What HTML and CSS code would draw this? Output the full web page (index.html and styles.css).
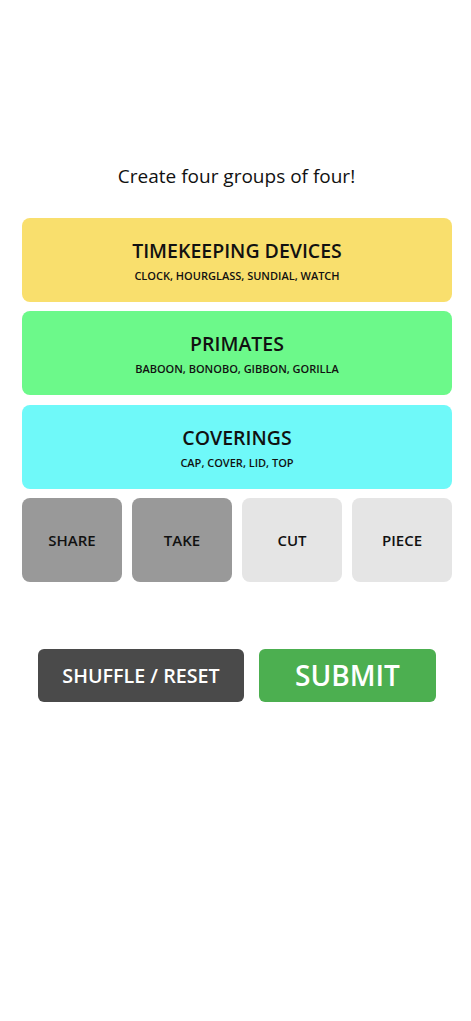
FILE: index.html
```html
<!DOCTYPE html>
<html lang="en">
<head>
<meta charset="utf-8">
<title>Connections</title>
<link rel="stylesheet" href="styles.css">
</head>
<body>
<main class="game">
  <h1 class="prompt">Create four groups of four!</h1>
  <section class="board">
    <div class="group group-yellow">
      <div class="group-title">TIMEKEEPING DEVICES</div>
      <div class="group-words">CLOCK, HOURGLASS, SUNDIAL, WATCH</div>
    </div>
    <div class="group group-green">
      <div class="group-title">PRIMATES</div>
      <div class="group-words">BABOON, BONOBO, GIBBON, GORILLA</div>
    </div>
    <div class="group group-cyan">
      <div class="group-title">COVERINGS</div>
      <div class="group-words">CAP, COVER, LID, TOP</div>
    </div>
    <div class="tiles">
      <div class="tile tile-selected">SHARE</div>
      <div class="tile tile-selected">TAKE</div>
      <div class="tile">CUT</div>
      <div class="tile">PIECE</div>
    </div>
  </section>
  <div class="actions">
    <button class="btn btn-shuffle">SHUFFLE / RESET</button>
    <button class="btn btn-submit">SUBMIT</button>
  </div>
</main>
</body>
</html>
```

FILE: styles.css
```css
* { box-sizing: border-box; }
html, body { margin: 0; padding: 0; background: #ffffff; }
body {
  font-family: "Open Sans", "DejaVu Sans", sans-serif;
  color: #111111;
}
.game {
  padding: 163px 19px 0 22px;
  display: flex;
  flex-direction: column;
}
.prompt {
  margin: 0 0 0 -1px;
  font-size: 19px;
  line-height: 26px;
  font-weight: 500;
  text-align: center;
  color: #111;
}
.board {
  margin-top: 29px;
  display: flex;
  flex-direction: column;
  gap: 9.33px;
}
.group {
  height: 84px;
  border-radius: 8px;
  padding-top: 22px;
  display: flex;
  flex-direction: column;
  align-items: center;
}
.group-yellow { background: #f9df6d; }
.group-green { background: #6cf98a; }
.group-cyan { background: #6ff9f9; }
.group-title {
  font-size: 19.5px;
  line-height: 22px;
  font-weight: 600;
}
.group-words {
  margin-top: 7px;
  font-size: 11px;
  line-height: 14px;
  font-weight: 600;
}
.tiles {
  display: grid;
  grid-template-columns: repeat(4, 1fr);
  gap: 10px;
}
.tile {
  height: 84px;
  border-radius: 8px;
  background: #e5e5e5;
  display: flex;
  align-items: center;
  justify-content: center;
  font-size: 15px;
  font-weight: 600;
}
.tile-selected { background: #999999; }
.actions {
  margin-top: 67px;
  display: flex;
  justify-content: center;
  gap: 15px;
}
.btn {
  height: 53px;
  border: none;
  border-radius: 6px;
  color: #ffffff;
  font-family: "Open Sans", "DejaVu Sans", sans-serif;
  font-weight: 600;
  padding: 0;
}
.btn-shuffle {
  width: 206px;
  background: #4a4a4a;
  font-size: 19.7px;
}
.btn-submit {
  width: 177px;
  background: #4caf50;
  font-size: 28px;
}
```
